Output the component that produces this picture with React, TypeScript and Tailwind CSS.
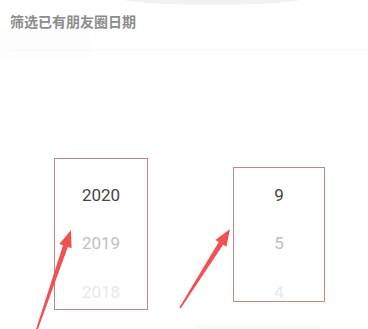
import React from "react";

function arrowPoints(sx: number, sy: number, tx: number, ty: number) {
  const dx = tx - sx;
  const dy = ty - sy;
  const len = Math.hypot(dx, dy);
  const ux = dx / len;
  const uy = dy / len;
  const px = -uy;
  const py = ux;
  const head = 17;
  const nx = tx - ux * head;
  const ny = ty - uy * head;
  const pts: [number, number][] = [
    [sx + px * 0.8, sy + py * 0.8],
    [nx + px * 2.6, ny + py * 2.6],
    [nx + px * 6.5, ny + py * 6.5],
    [tx, ty],
    [nx - px * 6.5, ny - py * 6.5],
    [nx - px * 2.6, ny - py * 2.6],
    [sx - px * 0.8, sy - py * 0.8],
  ];
  return pts.map((p) => p.map((v) => v.toFixed(1)).join(",")).join(" ");
}

const numFont = { fontFamily: "Roboto, 'Liberation Sans', sans-serif" };

export default function App() {
  return (
    <div className="relative w-[368px] h-[329px] overflow-hidden bg-white">
      <div className="absolute left-[112px] top-[-14px] h-[19px] w-[200px] rounded-[50%] bg-[#f1f1f1]" />
      <div className="absolute left-0 top-[30px] h-[30px] w-[90px] bg-[#fdfdfd]" />

      <div className="relative flex flex-col">
        <div
          className="mt-[11px] h-[20px] pl-[10px] text-[14px] font-bold leading-[20px] text-[#8c8c8c]"
          style={{ fontFamily: "'Noto Sans CJK SC', sans-serif" }}
        >
          筛选已有朋友圈日期
        </div>
        <div className="ml-[10px] mt-[19px] h-px bg-[#f7f7f7]" />

        <div className="relative mt-[107px] flex items-start" style={numFont}>
          <div className="ml-[54px] flex h-[152px] w-[94px] flex-col overflow-hidden border border-[#c68585] pt-[12px]">
            <div className="flex h-[48.5px] shrink-0 items-center justify-center text-[17px] text-[#444]">2020</div>
            <div className="flex h-[48.5px] shrink-0 items-center justify-center text-[17px] text-[#c0c0c0]">2019</div>
            <div className="flex h-[48.5px] shrink-0 items-center justify-center text-[17px] text-[#e8e8e8]">2018</div>
          </div>
          <div className="ml-[85px] mt-[9px] flex h-[135px] w-[92px] flex-col overflow-hidden border border-[#c68585] pt-[3px]">
            <div className="flex h-[48.5px] shrink-0 items-center justify-center text-[17px] text-[#444]">9</div>
            <div className="flex h-[48.5px] shrink-0 items-center justify-center text-[17px] text-[#c0c0c0]">5</div>
            <div className="flex h-[48.5px] shrink-0 items-center justify-center text-[17px] text-[#e8e8e8]">4</div>
          </div>
        </div>
      </div>

      <div className="absolute left-[195px] top-[326px] h-[3px] w-[125px] bg-[#f1fbf8]" />

      <svg className="absolute inset-0" width="368" height="329" viewBox="0 0 368 329">
        <polygon points={arrowPoints(36, 332, 71, 230)} fill="#f05252" />
        <polygon points={arrowPoints(180, 308, 230, 229)} fill="#f05252" />
      </svg>
    </div>
  );
}
